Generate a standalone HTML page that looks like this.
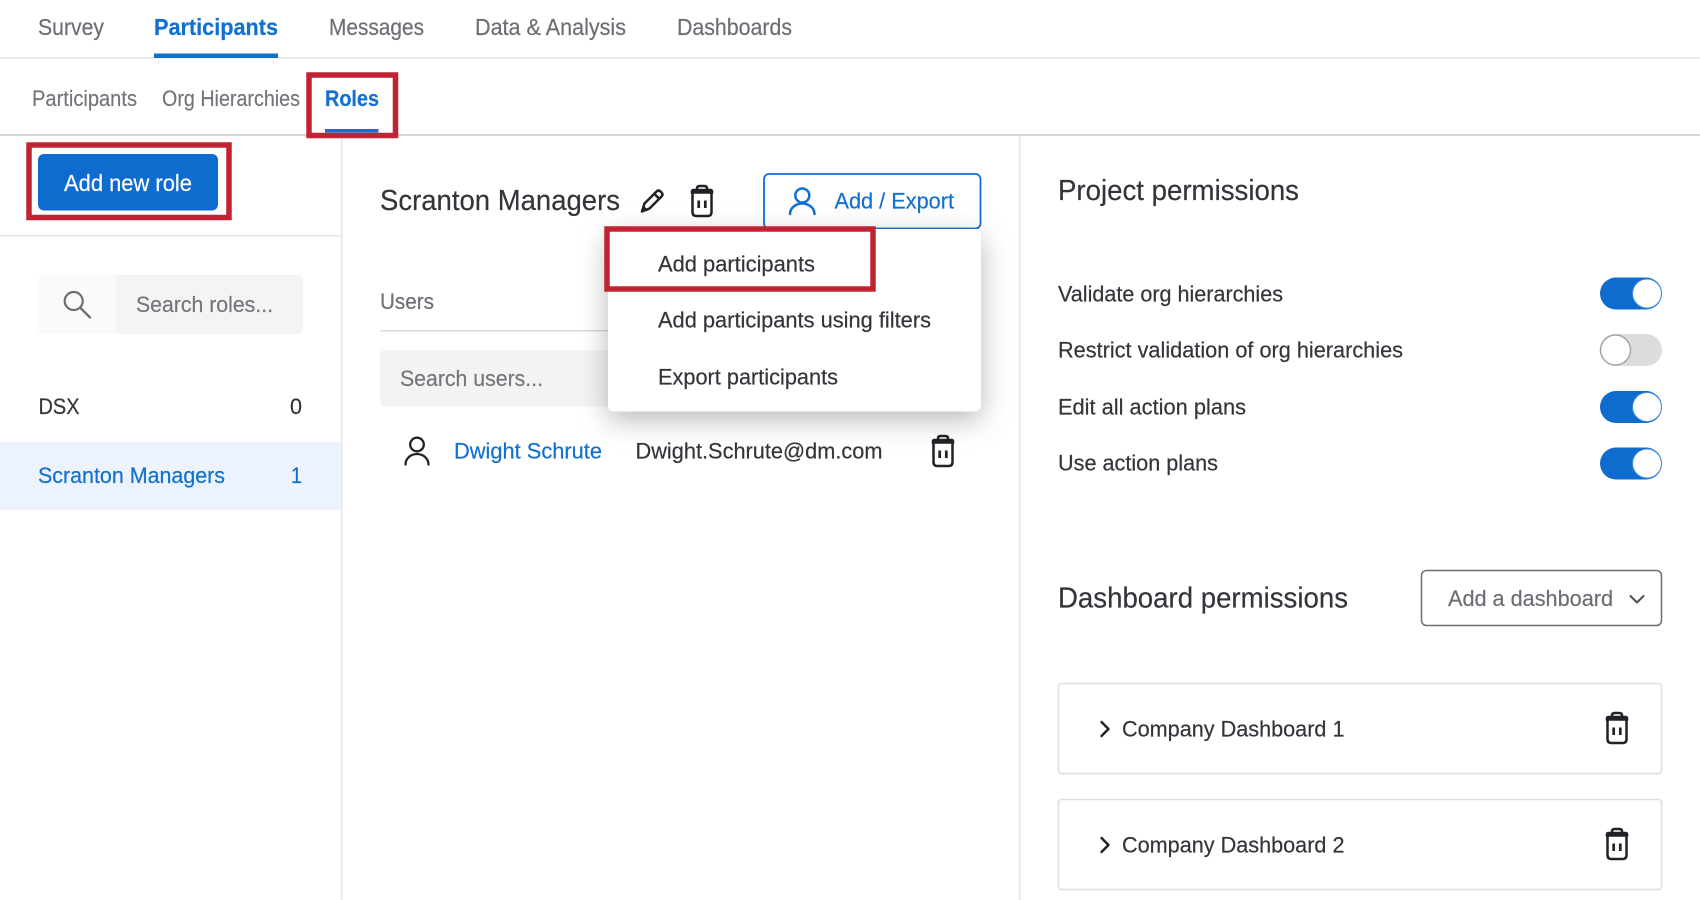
<!DOCTYPE html>
<html><head><meta charset="utf-8"><title>Roles</title>
<style>
html,body{margin:0;padding:0;background:#fff;width:1700px;height:900px;overflow:hidden}
svg{display:block;filter:blur(.35px)}
text{font-family:"Liberation Sans",sans-serif;font-size:22px;fill:#32363a;stroke:#32363a;stroke-width:.2px}
.n{font-size:23.5px;fill:#6b6f74;stroke:#6b6f74}
.s{font-size:22px;fill:#73777c;stroke:#73777c}
.b{fill:#1170d0;stroke:#1170d0}
.h{font-size:28.5px}
.g{fill:#6b6f74;stroke:#6b6f74}
</style></head><body>
<svg width="1700" height="900" viewBox="0 0 1700 900" xmlns="http://www.w3.org/2000/svg">
<defs>
<filter id="sh" x="-30%" y="-30%" width="160%" height="170%"><feDropShadow dx="0" dy="8" stdDeviation="14" flood-color="#000" flood-opacity=".28"/></filter>
<g id="tr" fill="none" stroke="#1f2226" stroke-width="2.500" stroke-linecap="round" stroke-linejoin="round">
<path d="M-10.500 -9.500Q-10.500 -11.500 -8.500 -11.500H8.500Q10.500 -11.500 10.500 -9.500V-8H-10.500Z" fill="#1f2226" stroke-width="1.600"/>
<path d="M-5 -11.500V-12.500Q-5 -15 -2.500 -15H2.500Q5 -15 5 -12.500V-11.500"/>
<path d="M-9.500 -8V11Q-9.500 15 -5.500 15H5.500Q9.500 15 9.500 11V-8"/>
<path d="M-3.300 -.5V7M3.300 -.5V7" stroke-width="2.700" stroke-linecap="butt"/>
</g>
</defs>
<rect width="1700" height="900" fill="#fff"/>
<!-- lines -->
<rect x="0" y="57" width="1700" height="1.500" fill="#e6e6e6"/>
<rect x="0" y="134" width="1700" height="2" fill="#d4d4d4"/>
<rect x="341" y="136" width="1.500" height="764" fill="#e6e6e6"/>
<rect x="1019" y="136" width="1.500" height="764" fill="#e6e6e6"/>
<rect x="0" y="235" width="341" height="1.500" fill="#e6e6e6"/>
<!-- nav -->
<text class="n" x="38" y="35" textLength="66" lengthAdjust="spacingAndGlyphs">Survey</text>
<text class="n b" x="154" y="35" textLength="124" lengthAdjust="spacingAndGlyphs" font-weight="700">Participants</text>
<rect x="154" y="53.500" width="124" height="4.500" fill="#1170d0"/>
<text class="n" x="329" y="35" textLength="95" lengthAdjust="spacingAndGlyphs">Messages</text>
<text class="n" x="475" y="35" textLength="151" lengthAdjust="spacingAndGlyphs">Data &amp; Analysis</text>
<text class="n" x="677" y="35" textLength="115" lengthAdjust="spacingAndGlyphs">Dashboards</text>
<!-- subnav -->
<text class="s" x="32" y="106" textLength="105" lengthAdjust="spacingAndGlyphs">Participants</text>
<text class="s" x="162" y="106" textLength="138" lengthAdjust="spacingAndGlyphs">Org Hierarchies</text>
<text class="b" x="325" y="106" textLength="54" lengthAdjust="spacingAndGlyphs" font-weight="700">Roles</text>
<rect x="325" y="129" width="53.500" height="3.500" fill="#1170d0"/>
<rect x="309" y="75" width="86.500" height="60.500" fill="none" stroke="#c12332" stroke-width="5.500"/>
<!-- add new role -->
<rect x="38" y="154" width="180" height="56.500" rx="6" fill="#0f6ccf"/>
<text x="64" y="191" textLength="128" lengthAdjust="spacingAndGlyphs" style="fill:#fff;stroke:#fff;font-size:23px">Add new role</text>
<rect x="29" y="145" width="200" height="72.500" fill="none" stroke="#c12332" stroke-width="5.500"/>
<!-- search roles -->
<rect x="38" y="275" width="265" height="59" rx="6" fill="#f4f4f4"/>
<path d="M44 275H116V334H44Q38 334 38 328V281Q38 275 44 275Z" fill="#fafafa"/>
<circle cx="73.700" cy="301" r="9" fill="none" stroke="#6b6f74" stroke-width="2.200"/>
<path d="M81 308.500L90 317.500" stroke="#6b6f74" stroke-width="2.300" stroke-linecap="round"/>
<text class="s" x="136" y="312" textLength="137" lengthAdjust="spacingAndGlyphs">Search roles...</text>
<!-- role list -->
<text x="38.500" y="414" textLength="41" lengthAdjust="spacingAndGlyphs">DSX</text>
<text x="290" y="414" textLength="12" lengthAdjust="spacingAndGlyphs">0</text>
<rect x="0" y="442" width="341" height="68" fill="#edf3fc"/>
<text class="b" x="38" y="483" textLength="187" lengthAdjust="spacingAndGlyphs">Scranton Managers</text>
<text class="b" x="291" y="483" textLength="11" lengthAdjust="spacingAndGlyphs">1</text>
<!-- middle -->
<text class="h" x="380" y="210" textLength="240" lengthAdjust="spacingAndGlyphs">Scranton Managers</text>
<g fill="none" stroke="#1f2226" stroke-width="2.500" stroke-linejoin="round" stroke-linecap="round">
<path d="M642 211.500L644.500 203.500L656.500 191.500Q658.500 189.500 660.500 191.500L661.500 192.500Q663.500 194.500 661.500 196.500L649.500 208.500Z"/>
<path d="M654.500 194L659 198.500"/>
</g>
<path d="M641 212.500L643 205L648.500 210.500Z" fill="#1f2226"/>
<use href="#tr" x="702" y="201"/>
<text x="380" y="309" class="g" textLength="54" lengthAdjust="spacingAndGlyphs">Users</text>
<rect x="380" y="330" width="240" height="1.500" fill="#d9d9d9"/>
<rect x="380" y="350" width="240" height="56.500" rx="5" fill="#f3f3f3"/>
<text class="s" x="400" y="386" textLength="143" lengthAdjust="spacingAndGlyphs">Search users...</text>
<g fill="none" stroke="#1f2226" stroke-width="2.300" stroke-linecap="round">
<circle cx="417" cy="444.500" r="6.800"/>
<path d="M405.500 464.500A11.500 10.500 0 0 1 428.500 464.500"/>
</g>
<text class="b" x="454" y="458.500" textLength="148" lengthAdjust="spacingAndGlyphs">Dwight Schrute</text>
<text x="635.500" y="458.500" textLength="247" lengthAdjust="spacingAndGlyphs">Dwight.Schrute@dm.com</text>
<use href="#tr" x="943" y="451"/>
<!-- add export button -->
<rect x="764" y="174" width="216.500" height="54.500" rx="5" fill="#fff" stroke="#1170d0" stroke-width="1.800"/>
<g fill="none" stroke="#1170d0" stroke-width="2.500" stroke-linecap="round">
<circle cx="802.300" cy="195.500" r="7"/>
<path d="M790 214A12.200 10.500 0 0 1 814.500 214"/>
</g>
<text class="b" x="834.500" y="208.500" textLength="119.500" lengthAdjust="spacingAndGlyphs">Add / Export</text>
<!-- dropdown -->
<rect x="608" y="229" width="373" height="182.500" rx="6" fill="#fff" filter="url(#sh)"/>
<text x="658" y="271.500" textLength="157" lengthAdjust="spacingAndGlyphs">Add participants</text>
<text x="658" y="327.500" textLength="273" lengthAdjust="spacingAndGlyphs">Add participants using filters</text>
<text x="658" y="384.500" textLength="180" lengthAdjust="spacingAndGlyphs">Export participants</text>
<rect x="607" y="229" width="266" height="60" fill="none" stroke="#c12332" stroke-width="5.500"/>
<!-- right -->
<text class="h" x="1058" y="200" textLength="241" lengthAdjust="spacingAndGlyphs">Project permissions</text>
<text x="1058" y="301.500" textLength="225" lengthAdjust="spacingAndGlyphs">Validate org hierarchies</text>
<text x="1058" y="357.500" textLength="345" lengthAdjust="spacingAndGlyphs">Restrict validation of org hierarchies</text>
<text x="1058" y="414.500" textLength="188" lengthAdjust="spacingAndGlyphs">Edit all action plans</text>
<text x="1058" y="470.500" textLength="160" lengthAdjust="spacingAndGlyphs">Use action plans</text>
<g>
<rect x="1600" y="277.500" width="62" height="32" rx="16" fill="#0f6ccf"/><circle cx="1647" cy="293.500" r="14.500" fill="#fff" stroke="#3f8be0" stroke-width="1"/>
<rect x="1600" y="334" width="62" height="32" rx="16" fill="#dcdcdc"/><circle cx="1615.500" cy="350" r="15" fill="#fff" stroke="#a4a4a4" stroke-width="1.500"/>
<rect x="1600" y="391" width="62" height="32" rx="16" fill="#0f6ccf"/><circle cx="1647" cy="407" r="14.500" fill="#fff" stroke="#3f8be0" stroke-width="1"/>
<rect x="1600" y="447.500" width="62" height="32" rx="16" fill="#0f6ccf"/><circle cx="1647" cy="463.500" r="14.500" fill="#fff" stroke="#3f8be0" stroke-width="1"/>
</g>
<text class="h" x="1058" y="607.500" textLength="290" lengthAdjust="spacingAndGlyphs">Dashboard permissions</text>
<rect x="1421.500" y="570.500" width="240" height="55" rx="5" fill="#fff" stroke="#6b6f74" stroke-width="1.500"/>
<text class="g" x="1448" y="606" textLength="165" lengthAdjust="spacingAndGlyphs">Add a dashboard</text>
<path d="M1630.500 596L1637 602.500L1643.500 596" fill="none" stroke="#4a4e52" stroke-width="2" stroke-linecap="round" stroke-linejoin="round"/>
<rect x="1058.500" y="683.500" width="603" height="90" rx="3" fill="#fff" stroke="#dedede" stroke-width="1.500"/>
<path d="M1101.500 722L1108.500 729L1101.500 736" fill="none" stroke="#1f2226" stroke-width="2.400" stroke-linecap="round" stroke-linejoin="round"/>
<text x="1122" y="736.500" textLength="222.500" lengthAdjust="spacingAndGlyphs">Company Dashboard 1</text>
<use href="#tr" x="1617" y="728"/>
<rect x="1058.500" y="799.500" width="603" height="90" rx="3" fill="#fff" stroke="#dedede" stroke-width="1.500"/>
<path d="M1101.500 838L1108.500 845L1101.500 852" fill="none" stroke="#1f2226" stroke-width="2.400" stroke-linecap="round" stroke-linejoin="round"/>
<text x="1122" y="852.500" textLength="222.500" lengthAdjust="spacingAndGlyphs">Company Dashboard 2</text>
<use href="#tr" x="1617" y="844"/>
</svg>
</body></html>
